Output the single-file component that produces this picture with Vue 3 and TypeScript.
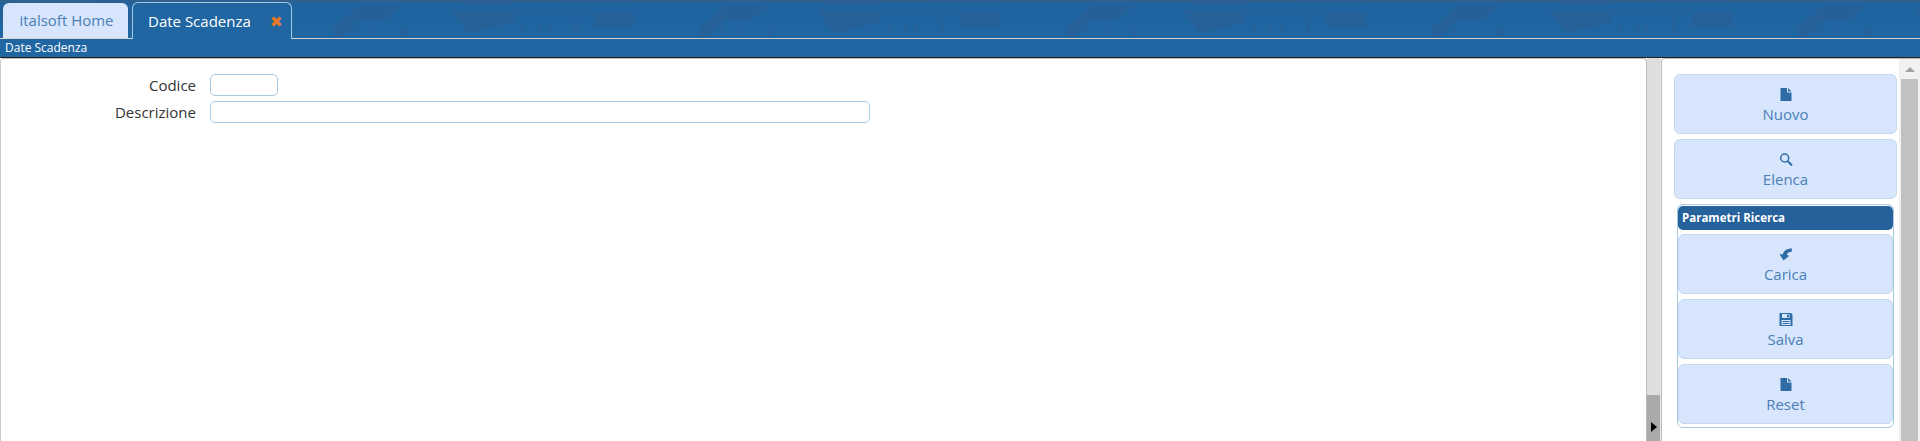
<script setup lang="ts">
type Azione = {
  nome: string
  icona: 'file' | 'search' | 'undo' | 'save'
}

const azioni: Azione[] = [
  { nome: 'Nuovo', icona: 'file' },
  { nome: 'Elenca', icona: 'search' },
]

const ricerca: Azione[] = [
  { nome: 'Carica', icona: 'undo' },
  { nome: 'Salva', icona: 'save' },
  { nome: 'Reset', icona: 'file' },
]
</script>

<template>
  <div class="page">
    <header class="tabbar">
      <svg class="texture" aria-hidden="true">
        <defs>
          <pattern id="palazzi" x="334" y="0" width="366" height="38" patternUnits="userSpaceOnUse">
            <path d="M0 28L25 6H68L50 20H25L8 38H0Z M117 10H180V22L140 32H133Z M260 12H300V27H260Z" fill="#2a5d93" />
            <path d="M127 0H180V6H127Z M225 0H300V3H225Z M180 8H258V14H180Z" fill="#2a5f97" opacity="0.7" />
            <path d="M20 28h3v7h-3Z M38 28h3v7h-3Z M66 29h6v8h-6Z M187 22h3v10h-3Z M204 22h3v10h-3Z M214 22h3v10h-3Z M240 20h4v14h-4Z" fill="#2a5d93" opacity="0.8" />
          </pattern>
        </defs>
        <rect width="100%" height="100%" fill="url(#palazzi)" opacity="0.6" />
      </svg>
      <div class="tab">italsoft Home</div>
      <div class="tab active">
        Date Scadenza
        <span class="close">✖</span>
      </div>
    </header>
    <div class="titlebar">Date Scadenza</div>
    <main class="content">
      <section class="form">
        <div class="row">
          <label>Codice</label>
          <input class="short" type="text" />
        </div>
        <div class="row">
          <label>Descrizione</label>
          <input class="long" type="text" />
        </div>
      </section>
      <div class="splitter">
        <div class="handle"><span class="arrow"></span></div>
      </div>
      <aside class="side">
        <div class="side-inner">
          <button v-for="a in azioni" :key="a.nome" class="btn">
            <svg v-if="a.icona === 'file'" class="icon" viewBox="0 0 14 13" aria-hidden="true">
              <path d="M1.5 0H8V4.5H12.5V13H1.5Z M9 0L12.5 3.5H9Z" />
            </svg>
            <svg v-else class="icon" viewBox="0 0 14 13" aria-hidden="true">
              <g fill="none">
                <circle cx="5.7" cy="5" r="4" stroke-width="1.5" />
                <path d="M8.6 8L13 12.5" stroke-width="2" />
              </g>
            </svg>
            {{ a.nome }}
          </button>
          <div class="group">
            <div class="legend">Parametri Ricerca</div>
            <button v-for="a in ricerca" :key="a.nome" class="btn">
              <svg class="icon" viewBox="0 0 14 13" aria-hidden="true">
                <path v-if="a.icona === 'undo'" d="M13 .5L12.5 4C10 4 8.5 4.5 7.8 6.5L10 8L4.5 12.5L.5 6L3.5 6.5C5 2.5 8 .5 13 .5Z" />
                <path v-else-if="a.icona === 'save'" fill-rule="evenodd" d="M0.5 0H12L13.5 1.5V13H0.5Z M3 1V5H10.5V1Z M8 1.5H9.8V4.5H8Z M2.5 7V12H11.5V7Z M3.5 8H10.5V8.9H3.5Z M3.5 10H10.5V10.9H3.5Z" />
                <path v-else d="M1.5 0H8V4.5H12.5V13H1.5Z M9 0L12.5 3.5H9Z" />
              </svg>
              {{ a.nome }}
            </button>
          </div>
        </div>
        <div class="scrollbar">
          <span class="up"></span>
          <div class="thumb"></div>
        </div>
      </aside>
    </main>
  </div>
</template>

<style>
html,
body {
  margin: 0;
  overflow: hidden;
}
</style>

<style scoped>
.page {
  width: 1920px;
  height: 441px;
  display: flex;
  flex-direction: column;
  overflow: hidden;
  font-family: "Open Sans", "Liberation Sans", sans-serif;
  background: #fff;
}

.tabbar {
  position: relative;
  height: 38px;
  flex: none;
  display: flex;
  align-items: flex-end;
  gap: 4px;
  padding-left: 3px;
  background: linear-gradient(#355f8a 0, #1f64a0 4px, #1f66a2 100%);
  border-bottom: 1px solid #d8d4cc;
}

.texture {
  position: absolute;
  inset: 0;
  width: 100%;
  height: 100%;
}

.tab {
  position: relative;
  width: 125px;
  height: 35px;
  padding-left: 2px;
  box-sizing: border-box;
  text-align: center;
  font-size: 15px;
  line-height: 35px;
  color: #4b7fb5;
  background: #d7e6fd;
  border-radius: 6px 6px 0 0;
}

.tab.active {
  width: 160px;
  height: 37px;
  margin-bottom: -1px;
  padding-left: 15px;
  text-align: left;
  color: #fff;
  line-height: 36px;
  background: #1f66a2;
  border: 1px solid #a6c9e2;
  border-bottom: 0;
}

.close {
  position: absolute;
  right: 8px;
  top: 0;
  font-size: 15px;
  color: #e9792a;
}

.titlebar {
  height: 19px;
  flex: none;
  box-sizing: border-box;
  padding-left: 5px;
  font-size: 12px;
  line-height: 18px;
  color: #fff;
  background: #1f66a2;
  border-bottom: 1px solid #222;
}

.content {
  flex: 1;
  min-height: 0;
  display: flex;
}

.form {
  width: 1647px;
  flex: none;
  box-sizing: border-box;
  padding-top: 15px;
  border-left: 1px solid #ccc;
  border-top: 1px solid #bbb;
  border-right: 1px solid #bbb;
  border-top-left-radius: 4px;
  border-top-right-radius: 4px;
}

.row {
  display: flex;
  align-items: center;
  height: 22px;
  margin-bottom: 5px;
}

.row label {
  width: 195px;
  margin-right: 14px;
  flex: none;
  text-align: right;
  font-size: 15px;
  color: #333;
}

.row input {
  height: 22px;
  box-sizing: border-box;
  padding: 0;
  background: #fff;
  border: 1px solid #a6c9e2;
  border-radius: 5px;
  outline: none;
}

.short {
  width: 68px;
}

.long {
  width: 660px;
}

.splitter {
  width: 13px;
  flex: none;
  display: flex;
  flex-direction: column;
  justify-content: flex-end;
  background: #dedede;
  border-right: 1px solid #e8e8e8;
}

.handle {
  height: 46px;
  display: flex;
  align-items: center;
  background: #aaa;
  padding-top: 17px;
  box-sizing: border-box;
}

.arrow {
  margin-left: 4px;
  border-left: 6px solid #000;
  border-top: 5px solid transparent;
  border-bottom: 5px solid transparent;
}

.side {
  flex: 1;
  min-width: 0;
  display: flex;
  background: #fff;
  border-top: 1px solid #bbb;
  border-left: 1px solid #bbb;
  border-top-left-radius: 4px;
}

.side-inner {
  width: 237px;
  flex: none;
  box-sizing: border-box;
  padding: 15px 0 0 12px;
}

.btn {
  display: flex;
  flex-direction: column;
  align-items: center;
  width: 223px;
  height: 60px;
  margin-bottom: 5px;
  padding: 13px 0 0;
  box-sizing: border-box;
  font: 15px/20px "Open Sans", "Liberation Sans", sans-serif;
  color: #4b7fb5;
  background: #d7e6fd;
  border: 1px solid #c3d9ef;
  border-radius: 6px;
}

.icon {
  width: 14px;
  height: 13px;
  margin-bottom: 3px;
  fill: #2f6ca6;
  stroke: none;
}

.icon g {
  stroke: #2f6ca6;
}

.group {
  width: 217px;
  height: 224px;
  margin-left: 3px;
  padding-top: 1px;
  box-sizing: border-box;
  border: 1px solid #a6c9e2;
  border-radius: 6px;
}

.legend {
  height: 24px;
  margin-bottom: 4px;
  padding-left: 4px;
  font-size: 11.5px;
  font-weight: 700;
  line-height: 24px;
  color: #fff;
  background: #25619b;
  border-radius: 5px;
}

.group .btn {
  width: 215px;
}

.scrollbar {
  flex: 1;
  background: #f1f1f1;
  display: flex;
  flex-direction: column;
  align-items: center;
}

.up {
  margin-top: 8px;
  border-bottom: 5px solid #a3a3a3;
  border-left: 5px solid transparent;
  border-right: 5px solid transparent;
}

.thumb {
  width: 17px;
  flex: 1;
  margin-top: 7px;
  background: #c1c1c1;
}
</style>
